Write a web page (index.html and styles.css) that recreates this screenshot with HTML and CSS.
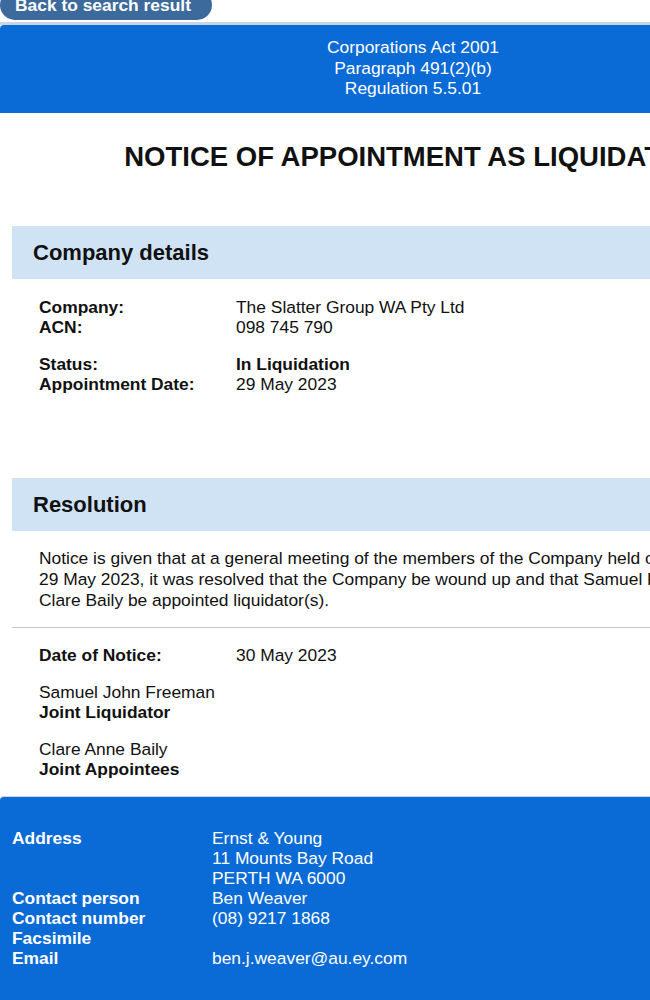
FILE: index.html
```html
<!DOCTYPE html>
<html lang="en">
<head>
	<meta charset="UTF-8">
	<title>Notice of Appointment as Liquidator</title>
	<link rel="stylesheet" href="styles.css">
</head>
<body>
	<div class="page">
		<a class="back" href="#">Back to search result</a>
		<div class="notice">
			<div class="head">
				<p>Corporations Act 2001</p>
				<p>Paragraph 491(2)(b)</p>
				<p>Regulation 5.5.01</p>
			</div>

			<h1 class="title">NOTICE OF APPOINTMENT AS LIQUIDATOR</h1>

			<div class="section">
				<h2 class="bar">Company details</h2>
				<div class="rows">
					<dl class="group">
						<dt>Company:</dt><dd>The Slatter Group WA Pty Ltd</dd>
						<dt>ACN:</dt><dd>098 745 790</dd>
					</dl>
					<dl class="group">
						<dt>Status:</dt><dd class="strong">In Liquidation</dd>
						<dt>Appointment Date:</dt><dd>29 May 2023</dd>
					</dl>
				</div>
			</div>

			<div class="section resolution">
				<h2 class="bar">Resolution</h2>
				<p class="text">Notice is given that at a general meeting of the members of the Company held on<br>29 May 2023, it was resolved that the Company be wound up and that Samuel Freeman and<br>Clare Baily be appointed liquidator(s).</p>
				<hr>
				<dl class="group">
					<dt>Date of Notice:</dt><dd>30 May 2023</dd>
				</dl>
				<div class="sign">
					<p>Samuel John Freeman</p>
					<p class="strong">Joint Liquidator</p>
				</div>
				<div class="sign">
					<p>Clare Anne Baily</p>
					<p class="strong">Joint Appointees</p>
				</div>
			</div>

			<div class="foot">
				<dl>
					<dt>Address</dt>
					<dd>Ernst &amp; Young<br>11 Mounts Bay Road<br>PERTH WA 6000</dd>
					<dt>Contact person</dt><dd>Ben Weaver</dd>
					<dt>Contact number</dt><dd>(08) 9217 1868</dd>
					<dt>Facsimile</dt><dd>&nbsp;</dd>
					<dt>Email</dt><dd>ben.j.weaver@au.ey.com</dd>
				</dl>
			</div>
		</div>
	</div>
</body>
</html>
```

FILE: styles.css
```css
*{
	margin: 0;
	padding: 0;
	box-sizing: border-box;
}
html, body{
	overflow: hidden;
}
body{
	background: #fff;
	color: #111;
	font-family: "Liberation Sans", Arial, sans-serif;
	font-size: 17.4px;
	line-height: 20px;
}
.page{
	width: 826px;
}
.back{
	display: inline-block;
	width: 212px;
	height: 30px;
	margin-top: -10px;
	padding-left: 15px;
	line-height: 30px;
	border-radius: 15px;
	background: #3d6a9c;
	color: #fff;
	font-weight: bold;
	text-decoration: none;
	vertical-align: top;
}
.notice{
	margin-top: 2px;
	border-top: 3px solid #c9d5e2;
}
.head{
	background: #0a6ad6;
	color: #fff;
	text-align: center;
	padding: 12px 0 14px;
	border-radius: 4px 4px 0 0;
	line-height: 20.5px;
}
.title{
	margin: 29px 0 54px;
	text-align: center;
	font-size: 27.5px;
	line-height: 30px;
}
.section{
	margin-left: 12px;
}
.bar{
	background: #cfe3f5;
	height: 53px;
	line-height: 53px;
	padding-left: 21px;
	font-size: 22px;
}
.rows{
	padding-top: 18px;
	margin-bottom: 84px;
}
.group{
	display: grid;
	grid-template-columns: 197px 1fr;
	padding-left: 27px;
	margin-bottom: 17px;
}
.group dt{
	font-weight: bold;
}
.strong{
	font-weight: bold;
}
.text{
	padding: 17px 27px 0;
	line-height: 21px;
	white-space: nowrap;
}
.resolution hr{
	border: 0;
	border-top: 1px solid #c8c8c8;
	margin: 16px 0 17px;
}
.sign{
	padding-left: 27px;
	margin-bottom: 17px;
}
.sign:last-child{
	margin-bottom: 17px;
}
.foot{
	border-top: 1px solid #c9d5e2;
	background: #0a6ad6;
	color: #fff;
	padding: 31px 12px 40px;
	border-radius: 4px 4px 0 0;
}
.foot dl{
	display: grid;
	grid-template-columns: 200px 1fr;
}
.foot dt{
	font-weight: bold;
}
```
